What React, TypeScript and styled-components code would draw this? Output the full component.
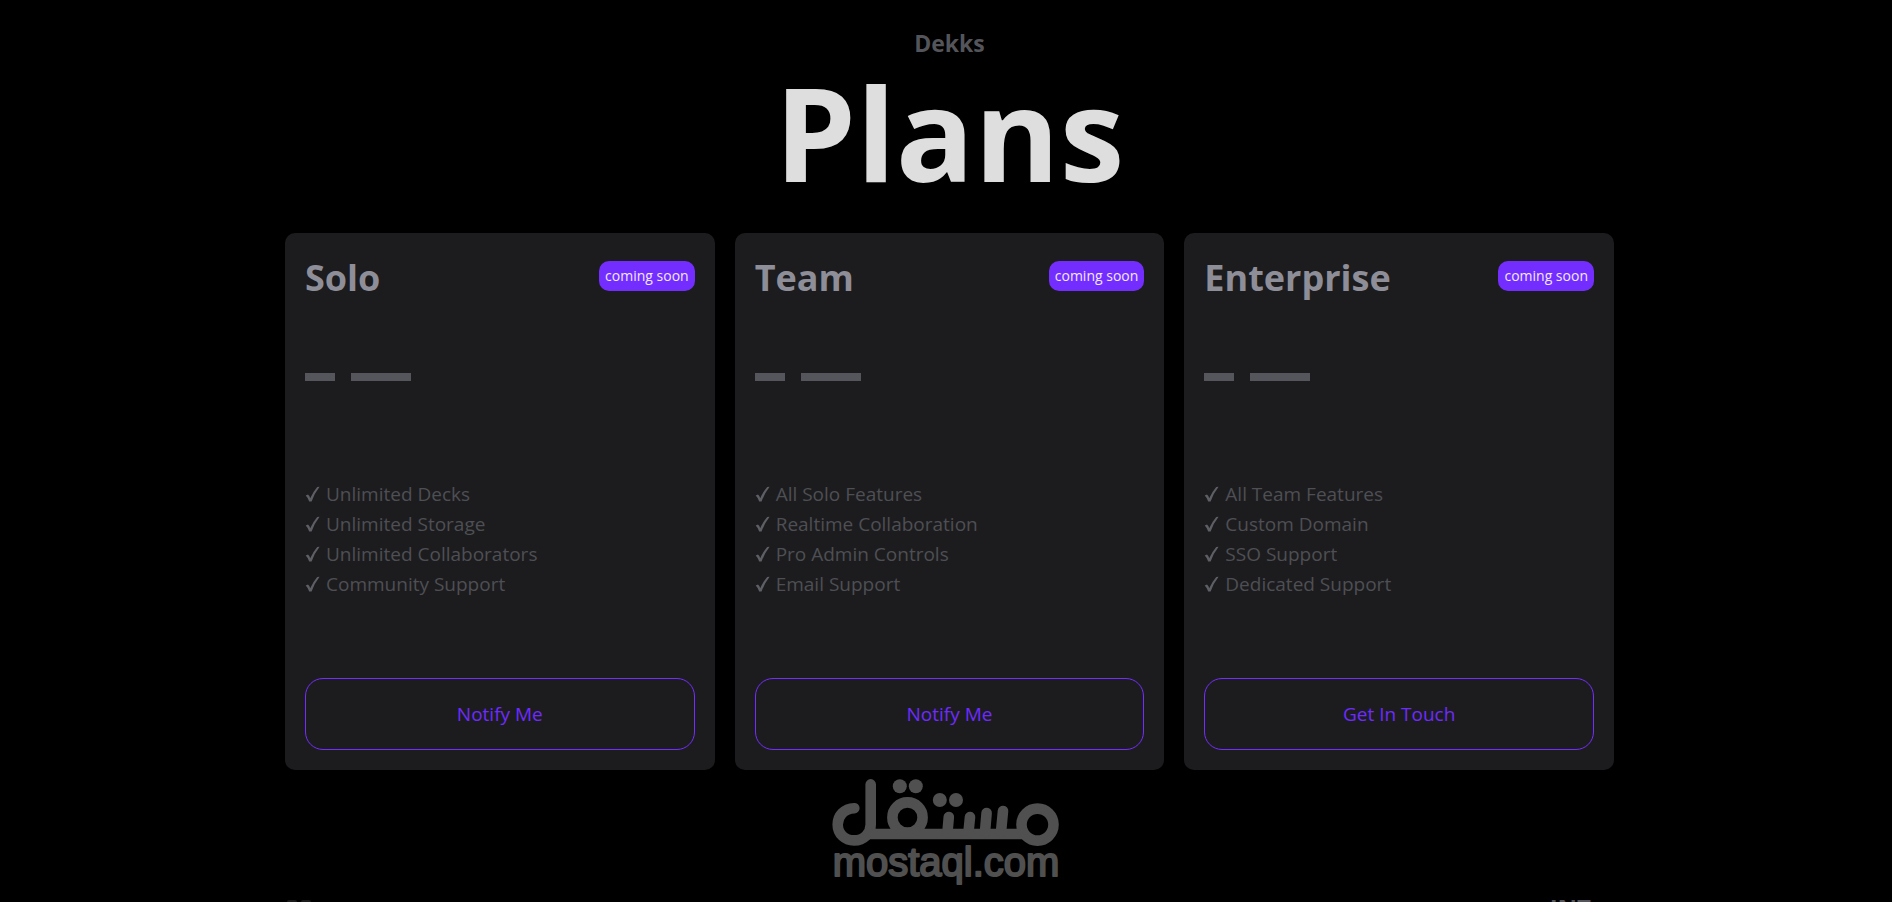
import React from 'react';
import styled, { createGlobalStyle } from 'styled-components';

const GlobalStyle = createGlobalStyle`
  * { box-sizing: border-box; }
  html, body { margin: 0; background: #000; }
  body { font-family: 'Segoe UI', 'Open Sans', 'Noto Sans', sans-serif; }
`;

const Page = styled.div`
  position: relative;
  height: 100vh;
  overflow: hidden;
  padding-left: 7px;
  background: #000;
`;

const Container = styled.main`
  width: 100%;
  max-width: 1329px;
  margin: 0 auto;
`;

const Header = styled.header`
  display: flex;
  flex-direction: column;
  align-items: center;
  padding-top: 24px;
  margin-bottom: 32px;
`;

const Brand = styled.p`
  margin: 0;
  color: #54555a;
  font-size: 23px;
  line-height: 38px;
  font-weight: 700;
`;

const Title = styled.h1`
  margin: 0;
  color: #dedede;
  font-size: 130px;
  line-height: 139px;
  font-weight: 700;
`;

const Plans = styled.section`
  display: grid;
  grid-template-columns: repeat(3, 1fr);
  gap: 20px;
`;

const Card = styled.article`
  display: flex;
  flex-direction: column;
  padding: 20px;
  border-radius: 10px;
  background: #1c1c1e;
`;

const CardHead = styled.div`
  display: flex;
  justify-content: space-between;
  align-items: flex-start;
  height: 48px;
`;

const PlanName = styled.h2`
  margin: 0;
  color: #8e8e99;
  font-size: 36px;
  line-height: 50px;
  font-weight: 700;
`;

const Badge = styled.span`
  margin-top: 8px;
  padding: 0 6px;
  border-radius: 10px;
  background: #742dff;
  color: #f0e8ff;
  font-size: 14px;
  line-height: 30px;
`;

const Price = styled.div`
  display: flex;
  align-items: center;
  gap: 16px;
  height: 152px;
`;

const Dash = styled.span<{ $wide?: boolean }>`
  width: ${(p) => (p.$wide ? 60 : 30)}px;
  height: 8px;
  background: #55565b;
`;

const Features = styled.ul`
  list-style: none;
  margin: 0;
  padding: 26px 0 79px;
`;

const Feature = styled.li`
  display: flex;
  align-items: center;
  gap: 6px;
  color: #4e4f54;
  font-size: 19px;
  line-height: 30px;
  font-weight: 400;
`;

const Action = styled.button`
  height: 72px;
  border: 1px solid #742dff;
  border-radius: 18px;
  background: transparent;
  color: #6e2bff;
  font-family: inherit;
  font-size: 19px;
  cursor: pointer;
`;

const Below = styled.section`
  display: flex;
  justify-content: space-between;
  padding: 120px 23px 0 2px;
`;

const Region = styled.span`
  color: #54555a;
  font-size: 24px;
  line-height: 36px;
  font-weight: 700;
`;

const Marks = styled.div`
  display: flex;
  gap: 4px;
  padding-top: 10px;
`;

const Mark = styled.span`
  width: 10px;
  height: 16px;
  border-radius: 2px;
  background: #1c1c1e;
`;

const Watermark = styled.div`
  position: absolute;
  left: 0;
  right: 0;
  top: 778px;
  display: flex;
  justify-content: center;
  pointer-events: none;
`;

const Check = () => (
  <svg width="15" height="17" viewBox="0 0 15 17" aria-hidden="true">
    <path d="M0.7 9.6 L3 8.6 Q4.6 10 5.2 12.2 Q8 6 12.2 1 L14.6 0.8 Q9.4 7.4 6.6 15.4 L4.2 15.6 Q3 11.8 0.7 9.6Z" fill="#5e5f64" />
  </svg>
);

const Logo = () => (
  <svg width="230" height="110" viewBox="-1 0 230 110" role="img" aria-label="mostaql">
    <g fill="none" stroke="#505050" strokeWidth="10.6" strokeLinecap="round">
      <path d="M22.3 30.2 C12 30.5 5.7 38 5.7 46.5 C5.7 56 13 62.4 22 62.4 C32 62.4 38.7 55 38.7 46.5 V6.4" />
      <path d="M36 56 H193" strokeLinecap="butt" />
      <circle cx="75.5" cy="39.5" r="15.1" />
      <circle cx="205.5" cy="46.6" r="16" />
      <path d="M116.8 39 L115.5 54 M138 39 L136.5 54 M154.6 35 L153 54 M171 33 L169 54" />
    </g>
    <g fill="#505050">
      <circle cx="67.8" cy="8.2" r="7" />
      <circle cx="83.8" cy="8.2" r="7" />
      <circle cx="107.8" cy="22" r="7" />
      <circle cx="124" cy="22" r="7" />
    </g>
    <text x="114" y="98" textAnchor="middle" fontFamily="'Liberation Sans', Arial, sans-serif" fontSize="40" fill="#505050" stroke="#505050" strokeWidth="2" strokeLinejoin="round">mostaql.com</text>
  </svg>
);

const plans = [
  { name: 'Solo', action: 'Notify Me', features: ['Unlimited Decks', 'Unlimited Storage', 'Unlimited Collaborators', 'Community Support'] },
  { name: 'Team', action: 'Notify Me', features: ['All Solo Features', 'Realtime Collaboration', 'Pro Admin Controls', 'Email Support'] },
  { name: 'Enterprise', action: 'Get In Touch', features: ['All Team Features', 'Custom Domain', 'SSO Support', 'Dedicated Support'] },
];

export default function App() {
  return (
    <Page>
      <GlobalStyle />
      <Container>
        <Header>
          <Brand>Dekks</Brand>
          <Title>Plans</Title>
        </Header>
        <Plans>
          {plans.map((plan) => (
            <Card key={plan.name}>
              <CardHead>
                <PlanName>{plan.name}</PlanName>
                <Badge>coming soon</Badge>
              </CardHead>
              <Price>
                <Dash />
                <Dash $wide />
              </Price>
              <Features>
                {plan.features.map((f) => (
                  <Feature key={f}>
                    <Check />
                    {f}
                  </Feature>
                ))}
              </Features>
              <Action type="button">{plan.action}</Action>
            </Card>
          ))}
        </Plans>
        <Below>
          <Marks>
            <Mark />
            <Mark />
          </Marks>
          <Region>INT</Region>
        </Below>
      </Container>
      <Watermark>
        <Logo />
      </Watermark>
    </Page>
  );
}
